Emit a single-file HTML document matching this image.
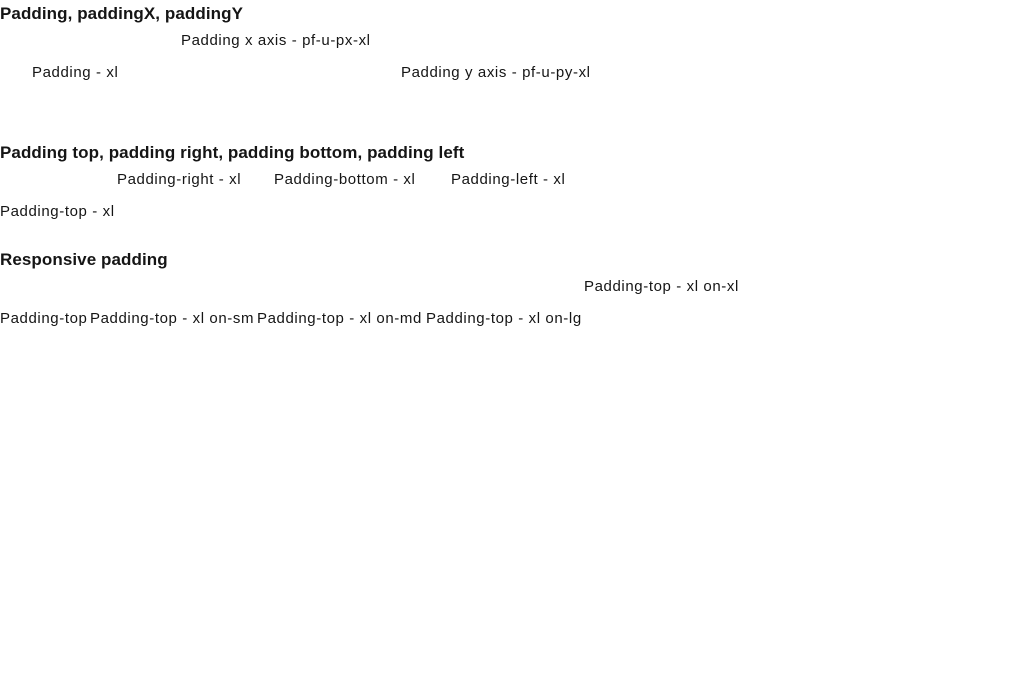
<!DOCTYPE html>
<html><head><meta charset="utf-8"><style>
body{margin:0;width:1012px;height:688px;background:#fff;color:#151515;font-family:"Liberation Sans",sans-serif;position:relative;overflow:hidden}
.t{position:absolute;white-space:nowrap;font-size:15px;line-height:20px;letter-spacing:0.6px}
.h{position:absolute;white-space:nowrap;font-size:17px;line-height:24px;font-weight:bold;letter-spacing:0.08px}
</style></head><body>
<div class="h" style="left:0;top:2px">Padding, paddingX, paddingY</div>
<div class="t" style="left:181px;top:31px">Padding x axis - pf-u-px-xl</div>
<div class="t" style="left:32px;top:63px">Padding - xl</div>
<div class="t" style="left:401px;top:63px">Padding y axis - pf-u-py-xl</div>
<div class="h" style="left:0;top:141px">Padding top, padding right, padding bottom, padding left</div>
<div class="t" style="left:117px;top:170px">Padding-right - xl</div>
<div class="t" style="left:274px;top:170px">Padding-bottom - xl</div>
<div class="t" style="left:451px;top:170px">Padding-left - xl</div>
<div class="t" style="left:0;top:202px">Padding-top - xl</div>
<div class="h" style="left:0;top:248px">Responsive padding</div>
<div class="t" style="left:584px;top:277px">Padding-top - xl on-xl</div>
<div class="t" style="left:0;top:309px">Padding-top</div>
<div class="t" style="left:90px;top:309px">Padding-top - xl on-sm</div>
<div class="t" style="left:257px;top:309px">Padding-top - xl on-md</div>
<div class="t" style="left:426px;top:309px">Padding-top - xl on-lg</div>
</body></html>
